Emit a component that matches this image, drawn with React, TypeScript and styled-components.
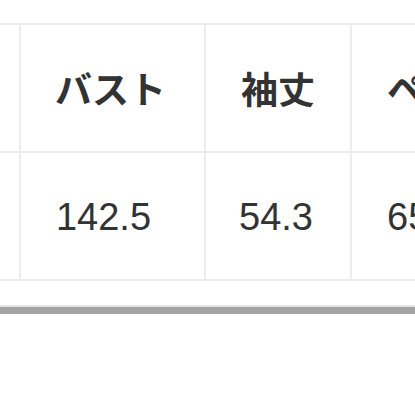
import React from "react";
import styled, { createGlobalStyle } from "styled-components";

const Global = createGlobalStyle`
  html, body { margin: 0; padding: 0; background: #fff; }
  body { width: 415px; height: 415px; overflow: hidden; }
`;

const Page = styled.div`
  width: 415px;
  height: 415px;
  overflow: hidden;
  padding-top: 23px;
  box-sizing: border-box;
  background: #fff;
`;

const Viewport = styled.div`
  width: 415px;
  overflow: hidden;
`;

const Grid = styled.div<{ $cols: string }>`
  display: grid;
  grid-template-columns: ${(p) => p.$cols};
  width: max-content;
  margin-left: -140px;
  border-top: 2px solid #ececec;
`;

const Cell = styled.div<{ $head?: boolean; $nudge?: number }>`
  box-sizing: border-box;
  height: 128px;
  border-right: 2px solid #ececec;
  border-bottom: 2px solid #ececec;
  display: flex;
  align-items: center;
  justify-content: center;
  white-space: nowrap;
  color: #333;
  font-family: ${(p) =>
    p.$head
      ? '"Noto Sans CJK JP", "Noto Sans", sans-serif'
      : '"Liberation Sans", Arial, sans-serif'};
  font-weight: ${(p) => (p.$head ? 700 : 400)};
  font-size: ${(p) => (p.$head ? "37px" : "38px")};
  padding-top: ${(p) => (p.$head ? "0" : "2px")};
  padding-right: ${(p) => p.$nudge ?? 0}px;
`;

const ScrollTrack = styled.div`
  margin-top: 24px;
  width: 415px;
  border-top: 2px solid #e2e2e2;
  height: 7px;
  background: #a4a4a4;
`;

const headers = [
  { t: "着丈", n: 0 },
  { t: "バスト", n: 4 },
  { t: "袖丈", n: 0 },
  { t: "ペ丈", n: 0 },
];
const values = [
  { t: "68.0", n: 0 },
  { t: "142.5", n: 18 },
  { t: "54.3", n: 4 },
  { t: "65.0", n: 0 },
];

export default function App() {
  return (
    <>
      <Global />
      <Page>
        <Viewport>
          <Grid $cols="161px 185px 146px 146px">
            {headers.map((h) => (
              <Cell $head $nudge={h.n} key={h.t}>
                {h.t}
              </Cell>
            ))}
            {values.map((v, i) => (
              <Cell $nudge={v.n} key={i}>
                {v.t}
              </Cell>
            ))}
          </Grid>
        </Viewport>
        <ScrollTrack />
      </Page>
    </>
  );
}
